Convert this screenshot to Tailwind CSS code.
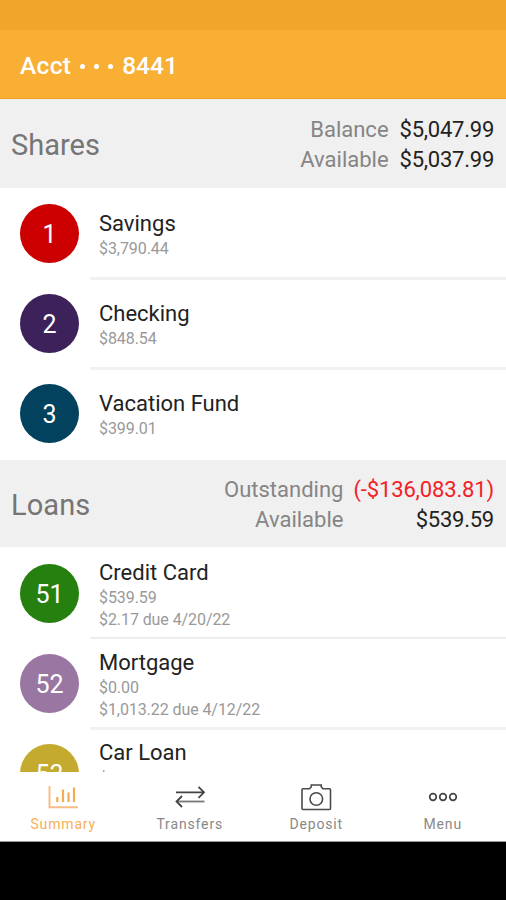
<!DOCTYPE html>
<html lang="en">
<head>
<meta charset="utf-8">
<title>Account Summary</title>
<script src="https://cdn.jsdelivr.net/npm/@tailwindcss/browser@4"></script>
</head>
<body class="bg-black">
<div class="flex h-[900px] w-[506px] flex-col overflow-hidden bg-black font-['Roboto','Liberation_Sans',sans-serif]">
  <div class="h-[30px] shrink-0 bg-[#f0a52b]"></div>
  <header class="flex h-[69px] shrink-0 items-center border-b border-[#f0a020] bg-[#f9ae34] pl-[20px] pt-1 text-[24.5px] font-medium text-white">
    <h1 class="flex items-center leading-7"><span class="tracking-[0.3px]">Acct</span><span class="mx-[9px] flex gap-[9px]"><i class="size-[5px] rounded-full bg-white"></i><i class="size-[5px] rounded-full bg-white"></i><i class="size-[5px] rounded-full bg-white"></i></span><span>8441</span></h1>
  </header>

  <main class="h-[673px] shrink-0 overflow-hidden bg-white">
    <section class="flex h-[89px] items-center justify-between bg-[#f0f0f0] pl-[11px] pr-[12px]">
      <h2 class="pt-0.5 text-[29px] leading-8 text-[#757575]">Shares</h2>
      <div class="grid grid-cols-[auto_auto] gap-x-[11px] pt-0.5 text-right text-[22px] leading-[29.5px]">
        <span class="text-[#858585]">Balance</span><span class="tracking-[-0.25px] text-[#222]">$5,047.99</span>
        <span class="text-[#858585]">Available</span><span class="tracking-[-0.25px] text-[#222]">$5,037.99</span>
      </div>
    </section>
    <ul>
      <li class="flex h-[90px] pl-5 pt-4">
        <div class="flex size-[59px] shrink-0 items-center justify-center rounded-full bg-[#cc0000] pt-0.5 text-[25px] text-white">1</div>
        <div class="-mb-0.5 -mt-4 ml-[11px] grow border-b-[3px] border-[#f1f1f1] pl-[9px] pt-[22px]">
          <div class="text-[22px] leading-[28px] text-[#222]">Savings</div>
          <div class="text-[16px] leading-[22px] tracking-[-0.08px] text-[#999]">$3,790.44</div>
        </div>
      </li>
      <li class="flex h-[90px] pl-5 pt-4">
        <div class="flex size-[59px] shrink-0 items-center justify-center rounded-full bg-[#3d215b] pt-0.5 text-[25px] text-white">2</div>
        <div class="-mb-0.5 -mt-4 ml-[11px] grow border-b-[3px] border-[#f1f1f1] pl-[9px] pt-[22px]">
          <div class="text-[22px] leading-[28px] text-[#222]">Checking</div>
          <div class="text-[16px] leading-[22px] tracking-[-0.08px] text-[#999]">$848.54</div>
        </div>
      </li>
      <li class="flex h-[92px] pl-5 pt-4">
        <div class="flex size-[59px] shrink-0 items-center justify-center rounded-full bg-[#03425e] pt-0.5 text-[25px] text-white">3</div>
        <div class="-mt-4 ml-[11px] grow pl-[9px] pt-[22px]">
          <div class="text-[22px] leading-[28px] text-[#222]">Vacation Fund</div>
          <div class="text-[16px] leading-[22px] tracking-[-0.08px] text-[#999]">$399.01</div>
        </div>
      </li>
    </ul>
    <section class="flex h-[87px] items-center justify-between bg-[#f0f0f0] pl-[11px] pr-[12px]">
      <h2 class="pt-0.5 text-[29px] leading-8 tracking-[0.1px] text-[#757575]">Loans</h2>
      <div class="grid grid-cols-[auto_auto] gap-x-[10px] pt-0.5 text-right text-[22px] leading-[29.5px]">
        <span class="text-[#858585]">Outstanding</span><span class="tracking-[-0.15px] text-[#f42027]">(-$136,083.81)</span>
        <span class="text-[#858585]">Available</span><span class="tracking-[-0.25px] text-[#222]">$539.59</span>
      </div>
    </section>
    <ul>
      <li class="flex h-[91px] pl-5 pt-[17px]">
        <div class="flex size-[59px] shrink-0 items-center justify-center rounded-full bg-[#25800f] pt-0.5 text-[25px] text-white">51</div>
        <div class="-mb-px -mt-[17px] ml-[11px] grow border-b-2 border-[#ededed] pl-[9px] pt-[12px]">
          <div class="text-[22px] leading-[28px] text-[#222]">Credit Card</div>
          <div class="text-[16px] leading-[22px] tracking-[-0.08px] text-[#999]">$539.59</div>
          <div class="text-[16px] leading-[22px] tracking-[-0.08px] text-[#999]">$2.17 due 4/20/22</div>
        </div>
      </li>
      <li class="flex h-[91px] pl-5 pt-4">
        <div class="flex size-[59px] shrink-0 items-center justify-center rounded-full bg-[#9977a2] pt-0.5 text-[25px] text-white">52</div>
        <div class="-mb-px -mt-4 ml-[11px] grow border-b-[3px] border-[#f1f1f1] pl-[9px] pt-[11px]">
          <div class="text-[22px] leading-[28px] text-[#222]">Mortgage</div>
          <div class="text-[16px] leading-[22px] tracking-[-0.08px] text-[#999]">$0.00</div>
          <div class="text-[16px] leading-[22px] tracking-[-0.08px] text-[#999]">$1,013.22 due 4/12/22</div>
        </div>
      </li>
      <li class="flex h-[90px] pl-5 pt-[15px]">
        <div class="flex size-[59px] shrink-0 items-center justify-center rounded-full bg-[#c4aa2e] pt-0.5 text-[25px] text-white">53</div>
        <div class="-mt-[15px] ml-[11px] grow pl-[9px] pt-[10px]">
          <div class="text-[22px] leading-[28px] text-[#222]">Car Loan</div>
          <div class="text-[16px] leading-[23px] tracking-[-0.08px] text-[#999]">$0.00</div>
        </div>
      </li>
    </ul>
  </main>

  <nav class="grid h-[70px] shrink-0 grid-cols-4 border-b border-[#999] bg-white text-center text-[14px] leading-[18px] tracking-[0.85px] text-[#888]">
    <a class="flex flex-col items-center pt-[10px] text-[#f7ae55]">
      <svg class="h-[32px] w-[32px]" viewBox="0 0 32 32" fill="none" stroke="#f5ac50" stroke-width="2"><path d="M2.500 4v21.300H31" stroke="#f7bd88"/><path d="M10.300 15v5M16 7.500v12.500M21.500 10.500v9.500M27 5.500v14.500" stroke-width="2.200"/></svg>
      <span class="mt-[1px]">Summary</span>
    </a>
    <a class="flex flex-col items-center pt-[10px]">
      <svg class="h-[32px] w-[32px]" viewBox="0 0 32 32" fill="none" stroke="#444" stroke-width="1.800"><path d="M2 10.300H30M24.500 4.800l5.500 5.500-5.500 5.500"/><path d="M30.500 19.500H3" stroke="#777"/><path d="M8 14l-5.500 5.500 5.500 5.500"/></svg>
      <span class="mt-[1px]">Transfers</span>
    </a>
    <a class="flex flex-col items-center pt-[10px]">
      <svg class="h-[32px] w-[32px]" viewBox="0 0 32 32" fill="none" stroke="#4a4a4a" stroke-width="1.600"><path d="M3 6.800h6.500l1.800-2V3h9.900v1.800l1.800 2h6.500q1 0 1 1v18.700q0 1-1 1H3q-1 0-1-1V7.800q0-1 1-1z"/><circle cx="16.300" cy="17" r="6.300"/></svg>
      <span class="mt-[1px]">Deposit</span>
    </a>
    <a class="flex flex-col items-center pt-[10px]">
      <svg class="h-[32px] w-[32px]" viewBox="0 0 32 32" fill="none" stroke="#444" stroke-width="1.700"><circle cx="6" cy="15" r="3.300"/><circle cx="16" cy="15" r="3.300"/><circle cx="26" cy="15" r="3.300"/></svg>
      <span class="mt-[1px]">Menu</span>
    </a>
  </nav>
</div>
</body>
</html>
